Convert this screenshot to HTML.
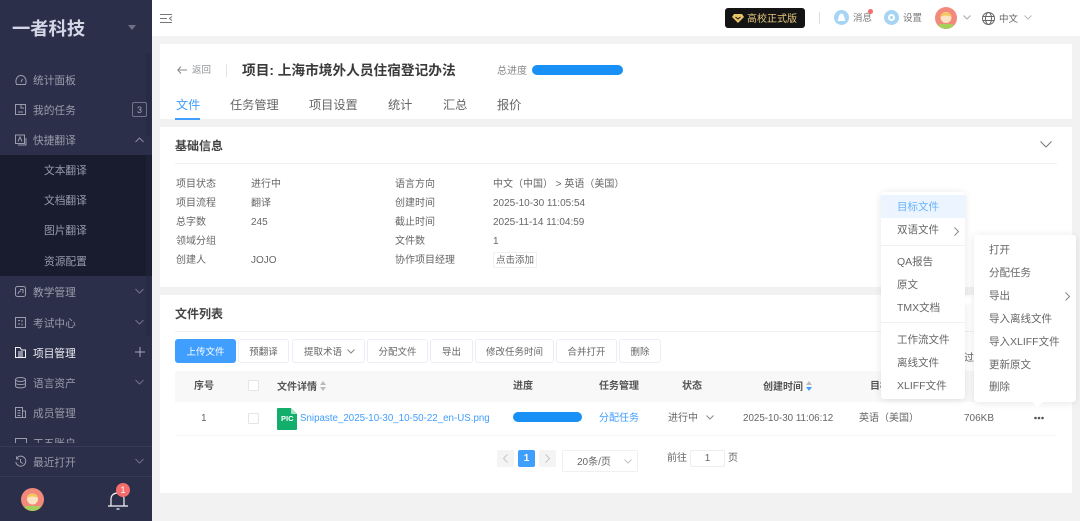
<!DOCTYPE html>
<html lang="zh"><head><meta charset="utf-8"><title>项目</title>
<style>
*{box-sizing:border-box;margin:0;padding:0}
html,body{width:1080px;height:521px;overflow:hidden;background:#f2f2f2}
body{position:relative;font-family:"Liberation Sans","Noto Sans CJK SC",sans-serif;font-size:10px;color:#666}
.t{position:absolute;white-space:nowrap;line-height:14px;transform:translateY(1px)}
.b{position:absolute}
.w{position:absolute;background:#fff}
svg{position:absolute;overflow:visible}
.s{color:#9a9cab;font-size:10.7px}
.btn{position:absolute;top:339px;height:24px;background:#fff;border:1px solid #ebeef5;border-radius:3px;text-align:center;line-height:26px;font-size:9.5px;color:#666}
.th{font-weight:700;color:#555;font-size:10px}
.mi{font-size:10.5px;color:#666}
</style></head><body>
<!-- sidebar -->
<div class="b" style="left:0;top:0;width:152px;height:521px;background:#2c2f4a"></div>
<div class="b" style="left:0;top:155px;width:152px;height:121px;background:#191b2f"></div>
<div class="b" style="left:146px;top:53px;width:5px;height:83px;background:#282b44"></div>
<div class="b" style="left:146px;top:155px;width:5px;height:121px;background:#1e2036"></div>
<div class="b" style="left:146px;top:276px;width:5px;height:60px;background:#282b44"></div>
<div class="t" style="left:12px;top:16px;font-size:18.3px;line-height:23px;font-weight:700;color:#d3d6e4">一者科技</div>
<svg style="left:128px;top:25px" width="9" height="6"><path d="M0 0H8L4 5Z" fill="#6e7085"/></svg>

<svg style="left:15px;top:74px" width="12" height="12" fill="none" stroke="#9a9cab"><path d="M1.5 10.5C-.5 5 3 1.5 6 1.5S12.500 5 10.500 10.500ZM6 8L7.500 5"/></svg>
<div class="t s" style="left:33px;top:73px">统计面板</div>
<svg style="left:15px;top:104px" width="12" height="12" fill="none" stroke="#9a9cab"><path d="M.5.5H10.500V10.500H.5ZM3 8H8M6 .5V4H9"/></svg>
<div class="t s" style="left:33px;top:103px">我的任务</div>
<div class="b" style="left:132px;top:102px;width:15px;height:15px;border:1px solid #70738a;border-radius:2px;color:#a4a6b4;font-size:9px;line-height:14px;text-align:center">3</div>
<svg style="left:15px;top:134px" width="12" height="12" fill="none" stroke="#9a9cab"><path d="M.5 1H9.500V9.500H.5ZM3 7.500L5 3L7 7.500M3 11H11V4"/></svg>
<div class="t s" style="left:33px;top:133px">快捷翻译</div>
<svg style="left:135px;top:137px" width="9" height="6" fill="none" stroke="#8a8ca0"><path d="M.5 5L4.500 1L8.500 5"/></svg>
<div class="t s" style="left:44px;top:163px">文本翻译</div>
<div class="t s" style="left:44px;top:193px">文档翻译</div>
<div class="t s" style="left:44px;top:223px">图片翻译</div>
<div class="t s" style="left:44px;top:254px">资源配置</div>

<svg style="left:15px;top:286px" width="12" height="12" fill="none" stroke="#9a9cab"><rect x=".5" y=".5" width="10" height="10" rx="2"/><path d="M3 8C3 6 5 5 6 5M5 3.500H8V7"/></svg>
<div class="t s" style="left:33px;top:285px">教学管理</div>
<svg style="left:15px;top:317px" width="12" height="12" fill="none" stroke="#9a9cab"><path d="M.5.5H10.500V10.500H.5ZM3 3.500H5M3 7H5M7 3V5M7 6.500V8.500"/></svg>
<div class="t s" style="left:33px;top:316px">考试中心</div>
<svg style="left:15px;top:347px" width="12" height="12" fill="none" stroke="#f2f2f6"><path d="M.5.5H5L6.500 3H10.500V10.500H.5ZM3 5H8M3 7H8M3 9H8"/></svg>
<div class="t" style="left:33px;top:346px;font-size:10.700px;color:#f0f0f5">项目管理</div>
<svg style="left:135px;top:347px" width="10" height="10" stroke="#a5a7b6"><path d="M0 5H10M5 0V10"/></svg>
<svg style="left:15px;top:377px" width="12" height="12" fill="none" stroke="#9a9cab"><ellipse cx="5.500" cy="2.500" rx="5" ry="2"/><path d="M.5 2.500V9C.5 11.500 10.500 11.500 10.500 9V2.500M.5 6C.5 8 10.500 8 10.500 6"/></svg>
<div class="t s" style="left:33px;top:376px">语言资产</div>
<svg style="left:15px;top:407px" width="12" height="12" fill="none" stroke="#9a9cab"><path d="M.5.5H7.500V10.500H.5ZM7.500 4H10.500V10.500H7.500M2.500 3.500H5.500M2.500 6H5.500M2.500 8.500H5.500"/></svg>
<div class="t s" style="left:33px;top:406px">成员管理</div>
<div class="b" style="left:0;top:436px;width:146px;height:7px;overflow:hidden"><div class="t s" style="left:33px;top:0">工五账户</div><div class="b" style="left:15px;top:2px;width:12px;height:8px;border:1px solid #9a9cab"></div></div>
<div class="b" style="left:0;top:446px;width:152px;height:1px;background:#363a58"></div>
<svg style="left:15px;top:456px" width="12" height="12" fill="none" stroke="#9a9cab"><path d="M1.500 2.500A5 5 0 1 1 .8 6M1.500 .5V3H4M5.500 3V6L8 7.500"/></svg>
<div class="t s" style="left:33px;top:455px">最近打开</div>
<div class="b" style="left:0;top:476px;width:152px;height:1px;background:#363a58"></div>
<svg style="left:21px;top:488px" width="23" height="23"><defs><clipPath id="c1"><circle cx="11.500" cy="11.500" r="11.500"/></clipPath></defs><g clip-path="url(#c1)"><rect width="23" height="23" fill="#f28a7b"/><rect x="4" y="18" width="15" height="6" fill="#a4cf5a"/><circle cx="11.500" cy="11" r="5.500" fill="#fbe3c6"/><path d="M6 10C6 4 17 4 17 10C14 8 9 8 6 10Z" fill="#f6c65a"/></g></svg>
<svg style="left:108px;top:488px" width="20" height="22" fill="none" stroke="#f5f5f8" stroke-width="1.200"><path d="M0 18H20M3 18V11C3 3 16 3 16 11V18M8.500 21H11.500"/></svg>
<div class="b" style="left:116px;top:483px;width:14px;height:14px;border-radius:50%;background:#f56c6c;color:#fff;font-size:9px;line-height:14px;text-align:center">1</div>
<svg style="left:135px;top:288px" width="9" height="6" fill="none" stroke="#70738a"><path d="M.5 1L4.500 5L8.500 1"/></svg>
<svg style="left:135px;top:319px" width="9" height="6" fill="none" stroke="#70738a"><path d="M.5 1L4.500 5L8.500 1"/></svg>
<svg style="left:135px;top:379px" width="9" height="6" fill="none" stroke="#70738a"><path d="M.5 1L4.500 5L8.500 1"/></svg>
<svg style="left:135px;top:458px" width="9" height="6" fill="none" stroke="#70738a"><path d="M.5 1L4.500 5L8.500 1"/></svg>

<!-- top bar -->
<div class="w" style="left:152px;top:0;width:928px;height:36px"></div>
<svg style="left:160px;top:13px" width="13" height="12" fill="none" stroke="#777"><path d="M0 1.500H12M0 5.500H7M0 9.500H12M12 3.500L9.500 5.500L12 7.500"/></svg>
<div class="b" style="left:725px;top:8px;width:80px;height:20px;background:#141414;border-radius:3px"></div>
<svg style="left:732px;top:14px" width="12" height="9"><path d="M2 0H10L12 3L6 9L0 3Z" fill="#e8c469"/><path d="M3.500 3L6 5L8.500 3" fill="none" stroke="#141414"/></svg>
<div class="t" style="left:747px;top:12px;font-size:10px;color:#e5c77f">高校正式版</div>
<div class="b" style="left:819px;top:12px;width:1px;height:12px;background:#ddd"></div>
<svg style="left:834px;top:10px" width="15" height="15"><circle cx="7.500" cy="7.500" r="7.500" fill="#a6d4f5"/><path d="M3.500 11C5 9 4 4 7.500 3.500C11 4 10 9 11.500 11Z" fill="#fff"/></svg>
<div class="t" style="left:853px;top:11px;font-size:9.500px;color:#777">消息</div>
<div class="b" style="left:868px;top:9px;width:5px;height:5px;border-radius:50%;background:#f56c6c"></div>
<svg style="left:884px;top:10px" width="15" height="15"><circle cx="7.500" cy="7.500" r="7.500" fill="#a6d4f5"/><circle cx="7.500" cy="7.500" r="2.500" fill="none" stroke="#fff" stroke-width="2"/></svg>
<div class="t" style="left:903px;top:11px;font-size:9.500px;color:#777">设置</div>
<svg style="left:935px;top:7px" width="22" height="22"><defs><clipPath id="c2"><circle cx="11" cy="11" r="11"/></clipPath></defs><g clip-path="url(#c2)"><rect width="22" height="22" fill="#f28a7b"/><rect x="4" y="17" width="14" height="6" fill="#a4cf5a"/><circle cx="11" cy="10.500" r="5.500" fill="#fbe3c6"/><path d="M5.500 10C5.500 4 16.500 4 16.500 10C14 8 8 8 5.500 10Z" fill="#f6c65a"/></g></svg>
<svg style="left:963px;top:15px" width="8" height="5" fill="none" stroke="#aaa"><path d="M.5.5L4 4L7.500.5"/></svg>
<svg style="left:982px;top:12px" width="13" height="13" fill="none" stroke="#666"><circle cx="6.500" cy="6.500" r="6"/><ellipse cx="6.500" cy="6.500" rx="3" ry="6"/><path d="M.5 4.500H12.500M.5 8.500H12.500"/></svg>
<div class="t" style="left:999px;top:12px;font-size:9.500px;color:#666">中文</div>
<svg style="left:1024px;top:15px" width="8" height="5" fill="none" stroke="#bbb"><path d="M.5.5L4 4L7.500.5"/></svg>

<!-- header card -->
<div class="w" style="left:160px;top:44px;width:912px;height:75px"></div>
<svg style="left:177px;top:66px" width="10" height="8" fill="none" stroke="#888"><path d="M4 .5L.8 4L4 7.500M1 4H10"/></svg>
<div class="t" style="left:192px;top:63px;font-size:9.500px;color:#909399">返回</div>
<div class="b" style="left:226px;top:64px;width:1px;height:13px;background:#e4e4e4"></div>
<div class="t" style="left:242px;top:62px;font-size:13.700px;line-height:16px;font-weight:700;color:#3a3a3a">项目: 上海市境外人员住宿登记办法</div>
<div class="t" style="left:497px;top:64px;font-size:10px;color:#888">总进度</div>
<div class="b" style="left:532px;top:65px;width:91px;height:10px;border-radius:5px;background:#1890f5"></div>
<div class="t" style="left:176px;top:97px;font-size:12.200px;color:#409eff">文件</div>
<div class="b" style="left:175px;top:118px;width:25px;height:1.500px;background:#409eff"></div>
<div class="t" style="left:230px;top:97px;font-size:12.200px">任务管理</div>
<div class="t" style="left:309px;top:97px;font-size:12.200px">项目设置</div>
<div class="t" style="left:388px;top:97px;font-size:12.200px">统计</div>
<div class="t" style="left:443px;top:97px;font-size:12.200px">汇总</div>
<div class="t" style="left:497px;top:97px;font-size:12.200px">报价</div>

<!-- basic info -->
<div class="w" style="left:160px;top:127px;width:912px;height:160px"></div>
<div class="t" style="left:175px;top:138px;font-size:12px;font-weight:700;color:#444">基础信息</div>
<div class="b" style="left:175px;top:163px;width:882px;height:1px;background:#f0f0f0"></div>
<svg style="left:1040px;top:141px" width="12" height="7" fill="none" stroke="#777"><path d="M.5.5L6 6L11.500.5"/></svg>
<div class="t" style="left:176px;top:177px">项目状态</div><div class="t" style="left:251px;top:177px">进行中</div>
<div class="t" style="left:176px;top:196px">项目流程</div><div class="t" style="left:251px;top:196px">翻译</div>
<div class="t" style="left:176px;top:215px">总字数</div><div class="t" style="left:251px;top:215px">245</div>
<div class="t" style="left:176px;top:234px">领域分组</div>
<div class="t" style="left:176px;top:253px">创建人</div><div class="t" style="left:251px;top:253px">JOJO</div>
<div class="t" style="left:395px;top:177px">语言方向</div><div class="t" style="left:493px;top:177px">中文（中国） &gt; 英语（美国）</div>
<div class="t" style="left:395px;top:196px">创建时间</div><div class="t" style="left:493px;top:196px">2025-10-30 11:05:54</div>
<div class="t" style="left:395px;top:215px">截止时间</div><div class="t" style="left:493px;top:215px">2025-11-14 11:04:59</div>
<div class="t" style="left:395px;top:234px">文件数</div><div class="t" style="left:493px;top:234px">1</div>
<div class="t" style="left:395px;top:253px">协作项目经理</div>
<div class="b" style="left:493px;top:252px;width:44px;height:16px;border:1px solid #f0f0f0;border-radius:2px;text-align:center;line-height:15px;font-size:9.500px">点击添加</div>

<!-- file list -->
<div class="w" style="left:160px;top:295px;width:912px;height:198px"></div>
<div class="t" style="left:175px;top:306px;font-size:12px;font-weight:700;color:#444">文件列表</div>
<div class="b" style="left:175px;top:331px;width:882px;height:1px;background:#f0f0f0"></div>
<div class="btn" style="left:175px;width:61px;background:#409eff;border-color:#409eff;color:#fff">上传文件</div>
<div class="btn" style="left:238px;width:51px">预翻译</div>
<div class="btn" style="left:292px;width:73px;text-align:left;padding-left:11px">提取术语</div>
<svg style="left:347px;top:349px" width="8" height="5" fill="none" stroke="#888"><path d="M.5.5L4 4L7.500.5"/></svg>
<div class="btn" style="left:367px;width:61px">分配文件</div>
<div class="btn" style="left:430px;width:43px">导出</div>
<div class="btn" style="left:475px;width:79px">修改任务时间</div>
<div class="btn" style="left:556px;width:61px">合并打开</div>
<div class="btn" style="left:619px;width:42px">删除</div>
<div class="t" style="left:964px;top:351px;font-size:10px">过</div>

<div class="b" style="left:175px;top:371px;width:882px;height:31px;background:#f8f8f8"></div>
<div class="t th" style="left:194px;top:379px">序号</div>
<div class="b" style="left:248px;top:380px;width:11px;height:11px;border:1px solid #e5e5e5;background:#fff;border-radius:1px"></div>
<div class="t th" style="left:277px;top:380px">文件详情</div>
<svg style="left:320px;top:381px" width="6" height="10"><path d="M0 4L3 0L6 4ZM0 6H6L3 10Z" fill="#bbb"/></svg>
<div class="t th" style="left:513px;top:379px">进度</div>
<div class="t th" style="left:599px;top:379px">任务管理</div>
<div class="t th" style="left:682px;top:379px">状态</div>
<div class="t th" style="left:763px;top:380px">创建时间</div>
<svg style="left:806px;top:381px" width="6" height="10"><path d="M0 4L3 0L6 4Z" fill="#bbb"/><path d="M0 6H6L3 10Z" fill="#409eff"/></svg>
<div class="t th" style="left:870px;top:379px">目标语言</div>

<div class="b" style="left:175px;top:435px;width:882px;height:1px;background:#f5f5f5"></div>
<div class="t" style="left:201px;top:411px;font-size:10px">1</div>
<div class="b" style="left:248px;top:413px;width:11px;height:11px;border:1px solid #e5e5e5;border-radius:1px"></div>
<svg style="left:277px;top:408px" width="20" height="22"><path d="M1 0H14L20 6V21A1 1 0 0 1 19 22H1A1 1 0 0 1 0 21V1A1 1 0 0 1 1 0Z" fill="#14ae6c"/><path d="M14 0L20 6H15A1 1 0 0 1 14 5Z" fill="#a8e3c8"/></svg>
<div class="t" style="left:281px;top:411px;font-size:7.500px;font-weight:700;color:#fff">PIC</div>
<div class="t" style="left:300px;top:411px;font-size:9.750px;color:#409eff">Snipaste_2025-10-30_10-50-22_en-US.png</div>
<div class="b" style="left:513px;top:412px;width:69px;height:10px;border-radius:5px;background:#1890f5"></div>
<div class="t" style="left:599px;top:411px;color:#409eff">分配任务</div>
<div class="t" style="left:668px;top:411px">进行中</div>
<svg style="left:706px;top:415px" width="8" height="5" fill="none" stroke="#888"><path d="M.5.5L4 4L7.500.5"/></svg>
<div class="t" style="left:743px;top:411px;font-size:9.800px">2025-10-30 11:06:12</div>
<div class="t" style="left:859px;top:411px">英语（美国）</div>
<div class="t" style="left:964px;top:411px">706KB</div>
<svg style="left:1034px;top:416px" width="10" height="4" fill="#555"><circle cx="1.500" cy="2" r="1.300"/><circle cx="5" cy="2" r="1.300"/><circle cx="8.500" cy="2" r="1.300"/></svg>

<!-- pagination -->
<div class="b" style="left:497px;top:450px;width:17px;height:17px;background:#f4f4f5;border-radius:2px"></div>
<svg style="left:503px;top:454px" width="5" height="9" fill="none" stroke="#c0c4cc"><path d="M4.500.5L.5 4.500L4.500 8.500"/></svg>
<div class="b" style="left:518px;top:450px;width:17px;height:17px;background:#409eff;border-radius:2px;color:#fff;font-weight:700;text-align:center;line-height:18px">1</div>
<div class="b" style="left:539px;top:450px;width:17px;height:17px;background:#f4f4f5;border-radius:2px"></div>
<svg style="left:545px;top:454px" width="5" height="9" fill="none" stroke="#c0c4cc"><path d="M.5.5L4.500 4.500L.5 8.500"/></svg>
<div class="b" style="left:562px;top:450px;width:76px;height:22px;border:1px solid #f0f0f0;border-radius:2px"></div>
<div class="t" style="left:577px;top:455px">20条/页</div>
<svg style="left:624px;top:459px" width="8" height="5" fill="none" stroke="#c0c4cc"><path d="M.5.5L4 4L7.500.5"/></svg>
<div class="t" style="left:667px;top:451px">前往</div>
<div class="b" style="left:690px;top:450px;width:35px;height:17px;border:1px solid #ededed;border-radius:2px;text-align:center;line-height:16px">1</div>
<div class="t" style="left:728px;top:451px">页</div>

<!-- menu 1 -->
<div class="w" style="left:881px;top:192px;width:84px;height:207px;border-radius:3px;box-shadow:0 1px 8px rgba(0,0,0,.1)"></div>
<div class="b" style="left:881px;top:195px;width:84px;height:23px;background:#ecf5ff"></div>
<div class="t mi" style="left:897px;top:199px;color:#66b1ff">目标文件</div>
<div class="t mi" style="left:897px;top:222px">双语文件</div>
<svg style="left:954px;top:227px" width="5" height="9" fill="none" stroke="#888"><path d="M.5.5L4.500 4.500L.5 8.500"/></svg>
<div class="b" style="left:881px;top:245px;width:84px;height:1px;background:#f0f0f0"></div>
<div class="t mi" style="left:897px;top:254px">QA报告</div>
<div class="t mi" style="left:897px;top:277px">原文</div>
<div class="t mi" style="left:897px;top:300px">TMX文档</div>
<div class="b" style="left:881px;top:322px;width:84px;height:1px;background:#f0f0f0"></div>
<div class="t mi" style="left:897px;top:332px">工作流文件</div>
<div class="t mi" style="left:897px;top:355px">离线文件</div>
<div class="t mi" style="left:897px;top:378px">XLIFF文件</div>

<!-- menu 2 -->
<div class="w" style="left:974px;top:235px;width:102px;height:167px;border-radius:3px;box-shadow:0 1px 8px rgba(0,0,0,.1)"></div>
<div class="b" style="left:1034px;top:399px;width:7px;height:7px;background:#fff;transform:rotate(45deg)"></div>
<div class="b" style="left:964px;top:297px;width:7px;height:7px;background:#fff;transform:rotate(45deg)"></div>
<div class="t mi" style="left:989px;top:242px">打开</div>
<div class="t mi" style="left:989px;top:265px">分配任务</div>
<div class="t mi" style="left:989px;top:288px">导出</div>
<svg style="left:1065px;top:292px" width="5" height="9" fill="none" stroke="#888"><path d="M.5.5L4.500 4.500L.5 8.500"/></svg>
<div class="t mi" style="left:989px;top:311px">导入离线文件</div>
<div class="t mi" style="left:989px;top:334px">导入XLIFF文件</div>
<div class="t mi" style="left:989px;top:357px">更新原文</div>
<div class="t mi" style="left:989px;top:379px">删除</div>
</body></html>
